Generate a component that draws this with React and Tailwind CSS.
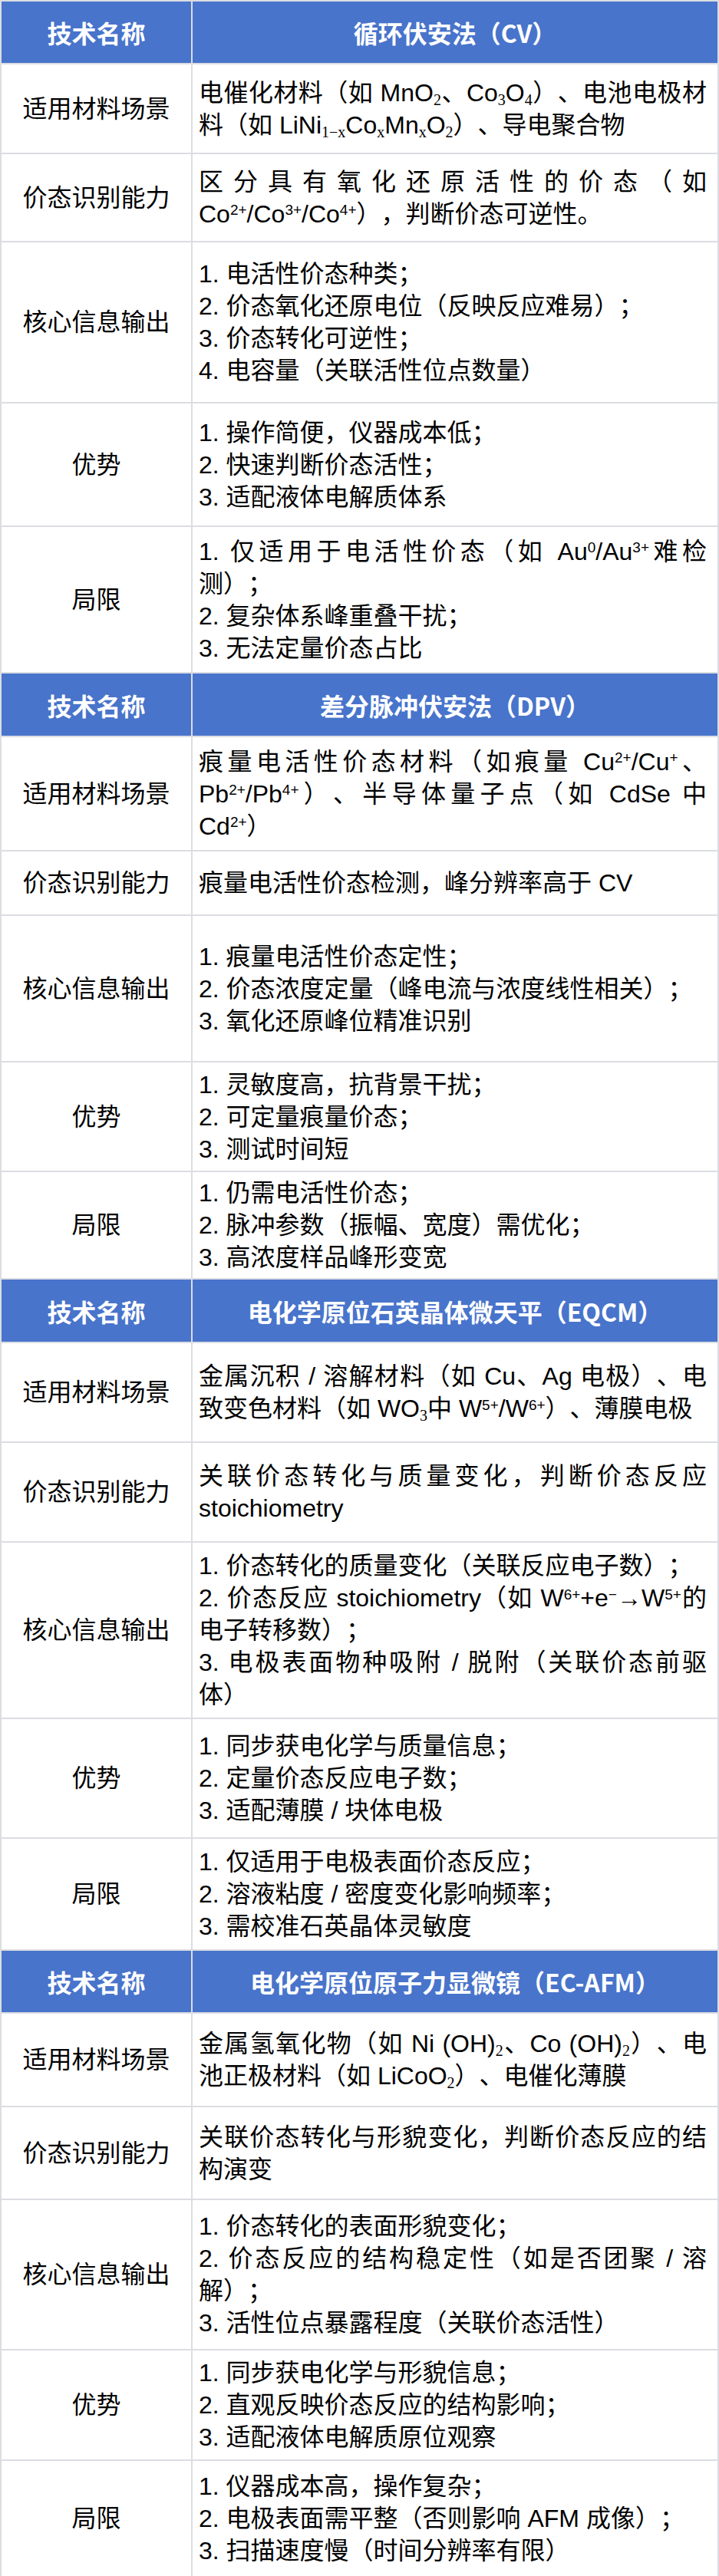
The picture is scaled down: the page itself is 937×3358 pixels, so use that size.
const labels = ['适用材料场景', '价态识别能力', '核心信息输出', '优势', '局限'];

// ^{..} is a superscript, _{..} a subscript
const tables = [
  {
    title: '循环伏安法（CV）',
    head: 'h-[82px]',
    rows: [
      { h: 'h-[117px]', lines: ['电催化材料（如 MnO_{2}、Co_{3}O_{4}）、电池电极材料（如 LiNi_{1−x}Co_{x}Mn_{x}O_{2}）、导电聚合物'] },
      { h: 'h-[115px]', lines: ['区分具有氧化还原活性的价态（如 Co^{2+}/Co^{3+}/Co^{4+}），判断价态可逆性。'] },
      { h: 'h-[210px]', lines: ['1. 电活性价态种类；', '2. 价态氧化还原电位（反映反应难易）；', '3. 价态转化可逆性；', '4. 电容量（关联活性位点数量）'] },
      { h: 'h-[161px]', lines: ['1. 操作简便，仪器成本低；', '2. 快速判断价态活性；', '3. 适配液体电解质体系'] },
      { h: 'h-[191px]', lines: ['1. 仅适用于电活性价态（如 Au^{0}/Au^{3+}难检测）；', '2. 复杂体系峰重叠干扰；', '3. 无法定量价态占比'] },
    ],
  },
  {
    title: '差分脉冲伏安法（DPV）',
    head: 'h-[83px]',
    rows: [
      { h: 'h-[149px]', lines: ['痕量电活性价态材料（如痕量 Cu^{2+}/Cu^{+}、Pb^{2+}/Pb^{4+}）、半导体量子点（如 CdSe 中 Cd^{2+}）'] },
      { h: 'h-[84px]', lines: ['痕量电活性价态检测，峰分辨率高于 CV'] },
      { h: 'h-[191px]', lines: ['1. 痕量电活性价态定性；', '2. 价态浓度定量（峰电流与浓度线性相关）；', '3. 氧化还原峰位精准识别'] },
      { h: 'h-[143px]', lines: ['1. 灵敏度高，抗背景干扰；', '2. 可定量痕量价态；', '3. 测试时间短'] },
      { h: 'h-[140px]', lines: ['1. 仍需电活性价态；', '2. 脉冲参数（振幅、宽度）需优化；', '3. 高浓度样品峰形变宽'] },
    ],
  },
  {
    title: '电化学原位石英晶体微天平（EQCM）',
    head: 'h-[83px]',
    rows: [
      { h: 'h-[130px]', lines: ['金属沉积 / 溶解材料（如 Cu、Ag 电极）、电致变色材料（如 WO_{3}中 W^{5+}/W^{6+}）、薄膜电极'] },
      { h: 'h-[130px]', lines: ['关联价态转化与质量变化，判断价态反应 stoichiometry'] },
      { h: 'h-[230px]', lines: ['1. 价态转化的质量变化（关联反应电子数）；', '2. 价态反应 stoichiometry（如 W^{6+}+e^{−}→W^{5+}的电子转移数）；', '3. 电极表面物种吸附 / 脱附（关联价态前驱体）'] },
      { h: 'h-[156px]', lines: ['1. 同步获电化学与质量信息；', '2. 定量价态反应电子数；', '3. 适配薄膜 / 块体电极'] },
      { h: 'h-[146px]', lines: ['1. 仅适用于电极表面价态反应；', '2. 溶液粘度 / 密度变化影响频率；', '3. 需校准石英晶体灵敏度'] },
    ],
  },
  {
    title: '电化学原位原子力显微镜（EC-AFM）',
    head: 'h-[82px]',
    rows: [
      { h: 'h-[122px]', lines: ['金属氢氧化物（如 Ni (OH)_{2}、Co (OH)_{2}）、电池正极材料（如 LiCoO_{2}）、电催化薄膜'] },
      { h: 'h-[121px]', lines: ['关联价态转化与形貌变化，判断价态反应的结构演变'] },
      { h: 'h-[196px]', lines: ['1. 价态转化的表面形貌变化；', '2. 价态反应的结构稳定性（如是否团聚 / 溶解）；', '3. 活性位点暴露程度（关联价态活性）'] },
      { h: 'h-[144px]', lines: ['1. 同步获电化学与形貌信息；', '2. 直观反映价态反应的结构影响；', '3. 适配液体电解质原位观察'] },
      { h: 'h-[152px]', lines: ['1. 仪器成本高，操作复杂；', '2. 电极表面需平整（否则影响 AFM 成像）；', '3. 扫描速度慢（时间分辨率有限）'] },
    ],
  },
];

function Rich({ text }) {
  const parts = text.split(/(\^\{[^}]*\}|_\{[^}]*\})/);
  return parts.map((p, i) => {
    if (p.startsWith('^{')) return <sup key={i} className="text-[19px]">{p.slice(2, -1)}</sup>;
    if (p.startsWith('_{')) return <sub key={i} className="text-[20px] font-['Liberation_Serif',serif]">{p.slice(2, -1)}</sub>;
    return p;
  });
}

function Header({ title, h }) {
  return (
    <div className={`flex ${h} border-b-2 border-[#dcdde3] bg-[#4874cb] text-white font-bold text-[32px] font-['Noto_Sans_CJK_SC',sans-serif]`}>
      <div className="w-[249px] shrink-0 flex items-center justify-center border-r-2 border-[#dcdde3]">技术名称</div>
      <div className="flex-1 flex items-center justify-center">{title}</div>
    </div>
  );
}

function Row({ label, row }) {
  return (
    <div className={`flex ${row.h} border-b-2 border-[#dcdde3] bg-white`}>
      <div className="w-[249px] shrink-0 flex items-center justify-center border-r-2 border-[#dcdde3]">{label}</div>
      <div className="flex-1 flex flex-col justify-center pl-2 pr-[14px] text-justify">
        {row.lines.map((line, i) => (
          <div key={i}>
            <Rich text={line} />
          </div>
        ))}
      </div>
    </div>
  );
}

export default function App() {
  return (
    <div className="w-[937px] bg-white border-l-2 border-r-2 border-t-2 border-[#dcdde3] text-black text-[32px] leading-[42px] [text-spacing-trim:space-all] font-['Liberation_Sans','Noto_Sans_CJK_SC',sans-serif]">
      {tables.map((t) => (
        <div key={t.title}>
          <Header title={t.title} h={t.head} />
          {t.rows.map((row, i) => (
            <Row key={i} label={labels[i]} row={row} />
          ))}
        </div>
      ))}
    </div>
  );
}
